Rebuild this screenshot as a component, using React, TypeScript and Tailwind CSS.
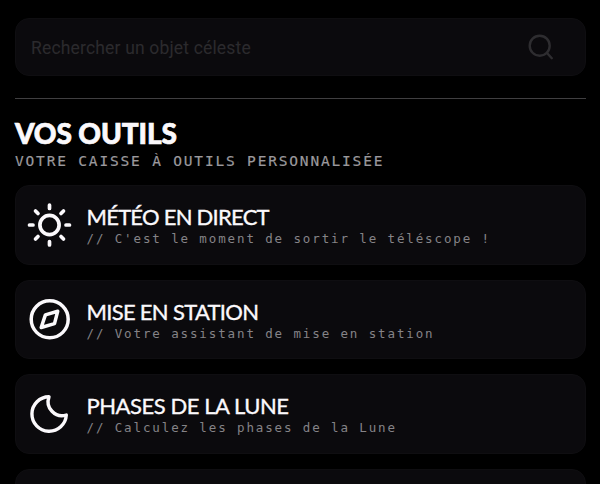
import type { ReactNode } from 'react';

const SunIcon = () => (
  <svg className="size-[46px]" viewBox="0 0 46 46" fill="none" stroke="#fbf9fc" strokeWidth="3.7" strokeLinecap="round">
    <circle cx="22.500" cy="23" r="9.6" />
    <path d="M22.500 3v3.500M22.500 39.500V43M2.500 23H6M39 23h3.500M8.500 9l2.500 2.500M34 34.500l2.500 2.500M36.500 9L34 11.500M11 34.500L8.500 37" />
  </svg>
);

const CompassIcon = () => (
  <svg className="size-[46px]" viewBox="0 0 46 46" fill="none" stroke="#fbf9fc" strokeWidth="3.5" strokeLinejoin="round">
    <circle cx="22.700" cy="23.300" r="18.500" />
    <path d="M30.700 15.300l-3.200 12.300L14.200 31.500l4.200-12.600z" />
  </svg>
);

const MoonIcon = () => (
  <svg className="size-[46px]" viewBox="0 0 46 46" fill="none" stroke="#fbf9fc" strokeWidth="3.400" strokeLinejoin="round">
    <path d="M22 5.800A17.200 17.200 0 1 0 39.300 24A14 14 0 0 1 22 5.800Z" />
  </svg>
);

type Tool = { title: string; text: string; icon: ReactNode; spacing: string };

const tools: Tool[] = [
  { title: 'MÉTÉO EN DIRECT', text: "// C'est le moment de sortir le téléscope !", icon: <SunIcon />, spacing: 'tracking-[-0.75px]' },
  { title: 'MISE EN STATION', text: '// Votre assistant de mise en station', icon: <CompassIcon />, spacing: 'tracking-[-0.7px]' },
  { title: 'PHASES DE LA LUNE', text: '// Calculez les phases de la Lune', icon: <MoonIcon />, spacing: 'tracking-[-0.45px]' },
];

const card = 'shrink-0 rounded-[14px] border border-[#0f0e11] bg-[#0b0a0d]';

export default function App() {
  return (
    <main className="flex h-[484px] w-[600px] flex-col overflow-hidden bg-black pl-[15px] pr-[14px] pt-[18px]">
      <div className={`${card} flex h-[58px] items-center justify-between pl-[15px] pr-[30px]`}>
        <span className="pt-px font-['Roboto',sans-serif] text-[17.500px] leading-6 tracking-[0.17px] text-[#2b2a2d]">Rechercher un objet céleste</span>
        <svg className="size-[28px]" viewBox="0 0 28 28" fill="none" stroke="#2e2d30" strokeWidth="2.4" strokeLinecap="round">
          <circle cx="12.700" cy="12.700" r="10" />
          <path d="M20.200 20.200l4.600 5" />
        </svg>
      </div>
      <hr className="mt-[22px] shrink-0 border-[#403f41]" />
      <h1 className="mt-[18px] shrink-0 whitespace-nowrap font-['Lato',sans-serif] text-[28px] font-black leading-[32px] tracking-[-0.1px] text-[#fbf9fc] [-webkit-text-stroke:0.7px_#fbf9fc]">VOS OUTILS</h1>
      <p className="mt-[3px] shrink-0 whitespace-nowrap font-['DejaVu_Sans_Mono',monospace] text-[14.500px] leading-[18px] tracking-[1.820px] text-[#9b999d] [-webkit-text-stroke:0.2px_#9b999d]">VOTRE CAISSE À OUTILS PERSONNALISÉE</p>
      <section className="mt-[15px] flex flex-col gap-[15px]">
        {tools.map((tool) => (
          <article key={tool.title} className={`${card} flex h-[79.600px] items-center gap-[13.500px] pl-[11px]`}>
            {tool.icon}
            <div className="whitespace-nowrap pt-[3px]">
              <h2 className={`font-['Lato',sans-serif] text-[22px] leading-[26px] text-[#fbf9fc] [-webkit-text-stroke:0.35px_#fbf9fc] ${tool.spacing}`}>{tool.title}</h2>
              <p className="font-['DejaVu_Sans_Mono',monospace] text-[12.500px] leading-[18px] tracking-[1.880px] text-[#858387]">{tool.text}</p>
            </div>
          </article>
        ))}
        <div className={`${card} h-[79.600px]`} />
      </section>
    </main>
  );
}
